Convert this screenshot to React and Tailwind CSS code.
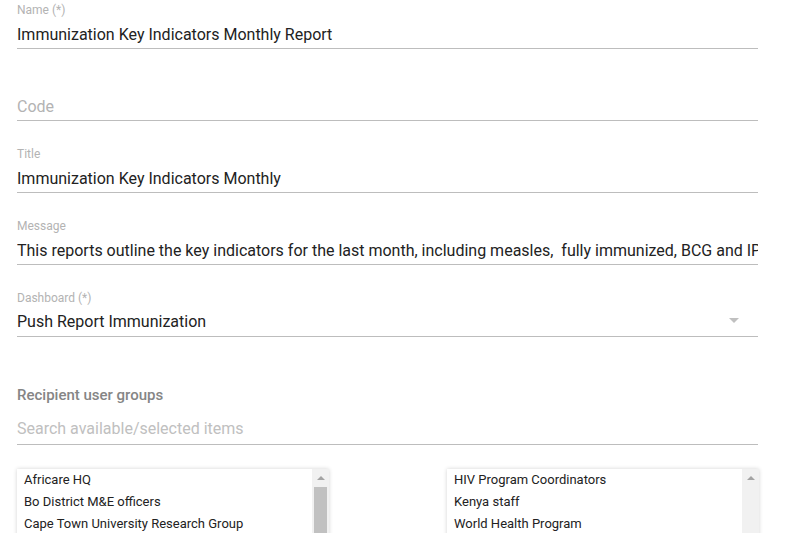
import React from "react";

const font = { fontFamily: "Roboto, 'Noto Sans', sans-serif" };

function Field({ label, value, placeholder, select }) {
  return (
    <div className="h-[72px] w-[741px]">
      <div className="h-[15px] text-[12px] leading-[15px] text-[#b3b3b3]">{label}</div>
      <div className="mt-[5px] relative h-[24px] overflow-hidden whitespace-pre text-[16px] leading-[24px]">
        {value ? (
          <span className={select ? "relative -top-[1px] text-[#222222]" : "text-[#222222]"}>{value}</span>
        ) : (
          <span className="text-[#b3b3b3]">{placeholder}</span>
        )}
        {select && (
          <div className="absolute right-[19px] top-[7px] w-0 h-0 border-l-[5px] border-r-[5px] border-t-[5px] border-l-transparent border-r-transparent border-t-[#c0c0c0]" />
        )}
      </div>
      <div className="mt-[1px] h-px bg-[#bdbdbd]" />
    </div>
  );
}

function ListBox({ items, thumb }) {
  return (
    <div className="relative w-[312px] h-[100px] bg-white shadow-[0_0_4px_rgba(0,0,0,0.18)] flex">
      <div className="flex-1 pl-[7px] text-[13px] text-[#222222]">
        {items.map((it) => (
          <div key={it} className="h-[22px] leading-[22px] whitespace-nowrap">{it}</div>
        ))}
      </div>
      <div className="w-[17px] bg-[#f1f1f1] flex flex-col items-center">
        <div className="h-[18px] flex items-center justify-center">
          <div className="w-0 h-0 border-l-[4px] border-r-[4px] border-b-[4px] border-l-transparent border-r-transparent border-b-[#a3a3a3]" />
        </div>
        {thumb && <div className="w-[13px] h-[80px] bg-[#c1c1c1]" />}
      </div>
    </div>
  );
}

export default function App() {
  return (
    <div className="w-[788px] h-[533px] overflow-hidden bg-white" style={font}>
      <div className="pl-[17px] pt-[3px]">
        <Field label="Name (*)" value="Immunization Key Indicators Monthly Report" />
        <Field label="" placeholder="Code" />
        <Field label="Title" value="Immunization Key Indicators Monthly" />
        <Field
          label="Message"
          value="This reports outline the key indicators for the last month, including measles,  fully immunized, BCG and IPV"
        />
        <Field label="Dashboard (*)" value="Push Report Immunization" select />

        <div className="mt-[22px] h-[20px] text-[15px] leading-[20px] font-medium text-[#858585]">
          Recipient user groups
        </div>
        <div className="mt-[12px] w-[741px]">
          <div className="h-[24px] text-[16px] leading-[24px] text-[#c0c0c0]">Search available/selected items</div>
          <div className="mt-[3px] h-px bg-[#bdbdbd]" />
        </div>

        <div className="mt-[24px] w-[742px] flex justify-between">
          <ListBox
            thumb
            items={["Africare HQ", "Bo District M&E officers", "Cape Town University Research Group", "Ghana"]}
          />
          <ListBox items={["HIV Program Coordinators", "Kenya staff", "World Health Program", "Zambia"]} />
        </div>
      </div>
    </div>
  );
}
